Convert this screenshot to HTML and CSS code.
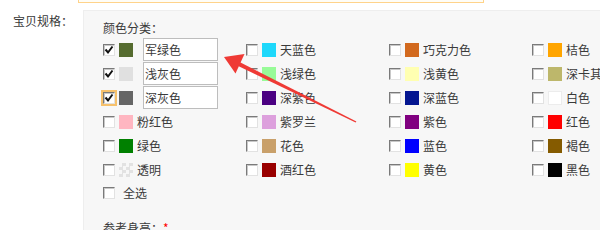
FILE: index.html
```html
<!DOCTYPE HTML>
<html>
  <head>
    <meta charset="UTF-8">
    <title>宝贝规格</title>
    <link rel="stylesheet" href="styles.css">
  </head>
  <body>
    <div class="tip-box"></div>

    <div class="form-row">
      <div class="form-label">宝贝规格：</div>
      <div class="spec-panel">
        <div class="spec-title">颜色分类：</div>

        <div class="color-grid">
          <div class="item"><span class="cb on"><svg viewBox="0 0 10 10"><polyline points="1.5,4.5 4,7.5 8.5,1.5"/></svg></span><span class="sw" style="background:#556b2f"></span><input class="alias" type="text" value="军绿色"></div>
          <div class="item"><span class="cb"></span><span class="sw" style="background:#1ed8fb"></span>天蓝色</div>
          <div class="item"><span class="cb"></span><span class="sw" style="background:#d2691e"></span>巧克力色</div>
          <div class="item"><span class="cb"></span><span class="sw" style="background:#ffa500"></span>桔色</div>

          <div class="item"><span class="cb on"><svg viewBox="0 0 10 10"><polyline points="1.5,4.5 4,7.5 8.5,1.5"/></svg></span><span class="sw" style="background:#e0e0e0"></span><input class="alias" type="text" value="浅灰色"></div>
          <div class="item"><span class="cb"></span><span class="sw" style="background:#98fb98"></span>浅绿色</div>
          <div class="item"><span class="cb"></span><span class="sw" style="background:#ffffb1"></span>浅黄色</div>
          <div class="item"><span class="cb"></span><span class="sw" style="background:#bdb76b"></span>深卡其布色</div>

          <div class="item"><span class="cb on focus"><svg viewBox="0 0 10 10"><polyline points="1.5,4.5 4,7.5 8.5,1.5"/></svg></span><span class="sw" style="background:#666666"></span><input class="alias" type="text" value="深灰色"></div>
          <div class="item"><span class="cb"></span><span class="sw" style="background:#4b0082"></span>深紫色</div>
          <div class="item"><span class="cb"></span><span class="sw" style="background:#041690"></span>深蓝色</div>
          <div class="item"><span class="cb"></span><span class="sw white"></span>白色</div>

          <div class="item"><span class="cb"></span><span class="sw" style="background:#ffb6c1"></span>粉红色</div>
          <div class="item"><span class="cb"></span><span class="sw" style="background:#dda0dd"></span>紫罗兰</div>
          <div class="item"><span class="cb"></span><span class="sw" style="background:#800080"></span>紫色</div>
          <div class="item"><span class="cb"></span><span class="sw" style="background:#ff0000"></span>红色</div>

          <div class="item"><span class="cb"></span><span class="sw" style="background:#008000"></span>绿色</div>
          <div class="item"><span class="cb"></span><span class="sw" style="background:#c9a06a"></span>花色</div>
          <div class="item"><span class="cb"></span><span class="sw" style="background:#0000ff"></span>蓝色</div>
          <div class="item"><span class="cb"></span><span class="sw" style="background:#855b00"></span>褐色</div>

          <div class="item"><span class="cb"></span><span class="sw clear"></span>透明</div>
          <div class="item"><span class="cb"></span><span class="sw" style="background:#990000"></span>酒红色</div>
          <div class="item"><span class="cb"></span><span class="sw" style="background:#ffff00"></span>黄色</div>
          <div class="item"><span class="cb"></span><span class="sw" style="background:#000000"></span>黑色</div>
        </div>

        <div class="item all"><span class="cb"></span>全选</div>

        <div class="spec-title next">参考身高：<span class="req">*</span></div>
      </div>
    </div>

    <!-- red arrow pointing at the first alias input -->
    <svg class="arrow" width="600" height="230" viewBox="0 0 600 230">
      <polygon points="356.4,121.4 355.6,122.6 238.2,66 240,62.2" fill="#ef3a35"/>
      <polygon points="224,57 244.5,54 235.5,73.5" fill="#ef3a35"/>
    </svg>
  </body>
</html>
```

FILE: styles.css
```css
html, body {
  margin: 0;
  overflow: hidden;
}

body {
  position: relative;
  width: 600px;
  height: 230px;
  background: #ffffff;
  font-family: "Noto Sans CJK SC", "Noto Sans", sans-serif;
  font-size: 12px;
  color: #3a3a3a;
}

.tip-box {
  margin-left: 78px;
  width: 404px;
  height: 2px;
  border: 1px solid #ffd38a;
  border-top: none;
  background: #fffdf6;
}

.form-row {
  display: flex;
  margin-top: 7px;
}

.form-label {
  width: 70px;
  padding-left: 13px;
  padding-top: 3px;
  line-height: 16px;
  flex-shrink: 0;
}

.spec-panel {
  flex: 1;
  min-width: 0;
  padding: 9px 0 0 19px;
  background: #f7f7f7;
  border-top: 1px solid #eeeeee;
  border-left: 1px solid #eeeeee;
  overflow: hidden;
}

.spec-title {
  line-height: 16px;
  margin-bottom: 2px;
}

.spec-title.next {
  margin-top: 16px;
}

.req {
  color: #ff0000;
}

.color-grid {
  display: grid;
  grid-template-columns: repeat(4, 143px);
  grid-auto-rows: 24px;
}

.item {
  display: flex;
  align-items: center;
  white-space: nowrap;
  line-height: 16px;
}

.cb {
  display: inline-block;
  box-sizing: border-box;
  width: 12px;
  height: 12px;
  margin-right: 4px;
  background: #ffffff;
  border: 1px solid;
  border-color: #7a7a7a #e2e2e2 #e2e2e2 #7a7a7a;
  box-shadow: inset 1px 1px 0 #c8c8c8;
  flex-shrink: 0;
}

.cb svg {
  display: block;
  width: 10px;
  height: 10px;
}

.cb polyline {
  fill: none;
  stroke: #111111;
  stroke-width: 2;
}

.cb.focus {
  outline: 2px solid #f6c16c;
}

.sw {
  display: inline-block;
  width: 14px;
  height: 14px;
  margin-right: 4px;
  flex-shrink: 0;
}

.sw.white {
  box-sizing: border-box;
  background: #ffffff;
  border: 1px solid #ececec;
}

.sw.clear {
  background-color: #f7f7f7;
  background-image: conic-gradient(#e2e2e2 25%, #f7f7f7 0 50%, #e2e2e2 0 75%, #f7f7f7 0);
  background-size: 7px 7px;
}

.alias {
  align-self: flex-start;
  box-sizing: border-box;
  width: 75px;
  height: 23px;
  margin: 0 0 0 6px;
  padding: 0 1px;
  border: 1px solid #bdbdbd;
  background: #ffffff;
  font-family: inherit;
  font-size: 12px;
  color: #3a3a3a;
}

.item.all {
  height: 22px;
}

.item.all .cb {
  margin-right: 8px;
}

.arrow {
  position: absolute;
  left: 0;
  top: 0;
  pointer-events: none;
}
```
